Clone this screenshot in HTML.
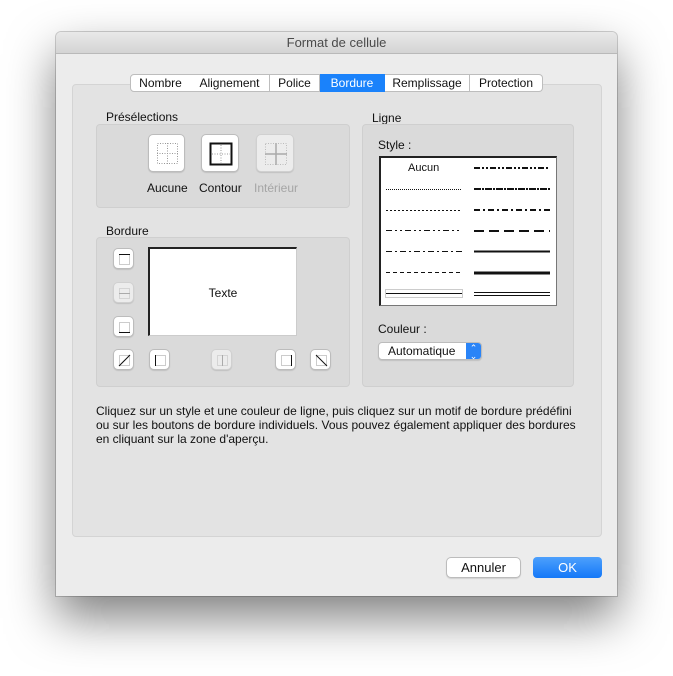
<!DOCTYPE html>
<html><head><meta charset="utf-8"><style>
*{box-sizing:border-box;margin:0;padding:0}
body{width:673px;height:676px;background:#fff;font-family:"Liberation Sans",sans-serif;font-size:12px;color:#111;position:relative;overflow:hidden}
.a{position:absolute}
#win{left:56px;top:32px;width:561px;height:564px;background:#ececec;border-radius:5px 5px 0 0;box-shadow:0 22px 48px rgba(0,0,0,.5),0 0 0 1px rgba(0,0,0,.18);overflow:hidden}
#title{left:0;top:0;width:561px;height:22px;background:linear-gradient(#e9e9e9,#d4d4d4);border-bottom:1px solid #b9b9b9;text-align:center;line-height:22px;font-size:13px;color:#4a4a4a}
.grp{background:#dadada;border:1px solid #cfcfcf;border-radius:4px}
.tab{top:74px;height:18px;line-height:17px;text-align:center;background:#fff;border:1px solid #bdbdbd;border-left:none;font-size:12px}
.btn{background:#fff;border:1px solid #bcbcbc;border-radius:5px;box-shadow:0 1px 1px rgba(0,0,0,.12)}
.dis{background:#ececec;border-color:#d0d0d0}
.sb{width:21px;height:21px}
</style></head><body>
<div class="a" id="win"><div class="a" id="title">Format de cellule</div></div>
<div class="a" style="left:72px;top:84px;width:530px;height:453px;background:#e3e3e3;border:1px solid #d4d4d4;border-radius:4px"></div>
<div class="a tab" style="left:130px;width:61px;border-left:1px solid #bdbdbd;border-radius:4px 0 0 4px">Nombre</div>
<div class="a tab" style="left:190px;width:80px">Alignement</div>
<div class="a tab" style="left:270px;width:50px">Police</div>
<div class="a tab" style="left:320px;width:65px;background:#1a82fb;color:#fff;border-color:#1a82fb">Bordure</div>
<div class="a tab" style="left:385px;width:85px">Remplissage</div>
<div class="a tab" style="left:470px;width:73px;border-radius:0 4px 4px 0">Protection</div>

<div class="a" style="left:106px;top:110px">Présélections</div>
<div class="a grp" style="left:96px;top:124px;width:254px;height:84px"></div>
<div class="a btn" style="left:148px;top:134px;width:37px;height:38px"><svg width="37" height="38"><g stroke="#999" stroke-dasharray="1 1.5" fill="none"><rect x="8.5" y="8.5" width="20" height="20"/><path d="M18.5 8v21M8 18.5h21"/></g></svg></div>
<div class="a btn" style="left:201px;top:134px;width:38px;height:38px"><svg width="38" height="38"><rect x="8.5" y="8.5" width="21" height="21" fill="none" stroke="#111" stroke-width="2"/><path d="M19 10v18M10 19h18" stroke="#999" stroke-dasharray="1 1.5"/></svg></div>
<div class="a btn dis" style="left:256px;top:134px;width:38px;height:38px"><svg width="38" height="38"><rect x="8.5" y="8.5" width="21" height="21" fill="none" stroke="#bbb" stroke-dasharray="1 1.5"/><path d="M19 8v22M8 19h22" stroke="#aaa" stroke-width="1.5"/></svg></div>
<div class="a" style="left:147px;top:181px">Aucune</div>
<div class="a" style="left:199px;top:181px">Contour</div>
<div class="a" style="left:254px;top:181px;color:#a5a5a5">Intérieur</div>

<div class="a" style="left:106px;top:224px">Bordure</div>
<div class="a grp" style="left:96px;top:237px;width:254px;height:150px"></div>
<div class="a btn sb" style="left:113px;top:248px"><svg width="21" height="21"><rect x="5.5" y="5.5" width="10" height="10" fill="none" stroke="#999" stroke-dasharray="1 1"/><path d="M5 5.5h11" stroke="#111"/></svg></div>
<div class="a btn sb dis" style="left:113px;top:282px"><svg width="21" height="21"><rect x="5.5" y="5.5" width="10" height="10" fill="none" stroke="#bbb" stroke-dasharray="1 1"/><path d="M5 10.5h11" stroke="#aaa"/></svg></div>
<div class="a btn sb" style="left:113px;top:316px"><svg width="21" height="21"><rect x="5.5" y="5.5" width="10" height="10" fill="none" stroke="#999" stroke-dasharray="1 1"/><path d="M5 15.5h11" stroke="#111"/></svg></div>
<div class="a btn sb" style="left:113px;top:349px"><svg width="21" height="21"><rect x="5.5" y="5.5" width="10" height="10" fill="none" stroke="#999" stroke-dasharray="1 1"/><path d="M5 16L16 5" stroke="#111"/></svg></div>
<div class="a btn sb" style="left:149px;top:349px"><svg width="21" height="21"><rect x="5.5" y="5.5" width="10" height="10" fill="none" stroke="#999" stroke-dasharray="1 1"/><path d="M5.5 5v11" stroke="#111"/></svg></div>
<div class="a btn sb dis" style="left:211px;top:349px"><svg width="21" height="21"><rect x="5.5" y="5.5" width="10" height="10" fill="none" stroke="#bbb" stroke-dasharray="1 1"/><path d="M10.5 5v11" stroke="#aaa"/></svg></div>
<div class="a btn sb" style="left:275px;top:349px"><svg width="21" height="21"><rect x="5.5" y="5.5" width="10" height="10" fill="none" stroke="#999" stroke-dasharray="1 1"/><path d="M15.5 5v11" stroke="#111"/></svg></div>
<div class="a btn sb" style="left:310px;top:349px"><svg width="21" height="21"><rect x="5.5" y="5.5" width="10" height="10" fill="none" stroke="#999" stroke-dasharray="1 1"/><path d="M5 5L16 16" stroke="#111"/></svg></div>
<div class="a" style="left:148px;top:247px;width:149px;height:89px;background:#fff;border:1px solid #ccc;border-top:2px solid #222;border-left:2px solid #222;text-align:center;line-height:88px">Texte</div>

<div class="a" style="left:372px;top:111px">Ligne</div>
<div class="a" style="left:362px;top:124px;width:212px;height:263px;background:#dadada;border:1px solid #cfcfcf;border-radius:4px"></div>
<div class="a" style="left:378px;top:138px">Style :</div>
<div class="a" style="left:379px;top:156px;width:178px;height:150px;background:#fff;border:1px solid #777;border-left:2px solid #222;border-top:2px solid #222"></div>
<div class="a" style="left:408px;top:162px;font-size:11px">Aucun</div>
<svg class="a" style="left:379px;top:156px" width="178" height="150">
<g fill="none" stroke="#111">
<path d="M7 33.5h76" stroke-dasharray="1 1"/>
<path d="M7 54.5h76" stroke-dasharray="2 2"/>
<path d="M7 74.5h76" stroke-dasharray="6 3 2 3 2 3"/>
<path d="M7 95.5h76" stroke-dasharray="6 3 2 3"/>
<path d="M7 116.5h76" stroke-dasharray="4 3"/>
<path d="M7 137.5h76"/>
<rect x="6.5" y="133.5" width="77" height="8" stroke="#999" stroke-dasharray="1 1"/>
<path d="M95 12h76" stroke-width="2" stroke-dasharray="6 2 2 2 2 2"/>
<path d="M95 33h76" stroke-width="2" stroke-dasharray="7 1 2 1"/>
<path d="M95 54h76" stroke-width="2" stroke-dasharray="6 3 2 3"/>
<path d="M95 75h76" stroke-width="2" stroke-dasharray="10 5"/>
<path d="M95 95.5h76" stroke-width="2"/>
<path d="M95 117h76" stroke-width="3"/>
<path d="M95 136.5h76M95 139.5h76"/>
</g></svg>
<div class="a" style="left:378px;top:322px">Couleur :</div>
<div class="a btn" style="left:378px;top:342px;width:104px;height:18px;border-radius:4px;overflow:hidden;padding-left:9px;line-height:16px">Automatique<div class="a" style="right:0;top:0;width:15px;height:17px;background:#2a84f7;color:#fff;font-size:9px;line-height:8px;text-align:center;padding-top:1px">⌃<br>⌄</div></div>

<div class="a" style="left:96px;top:404px;width:490px;line-height:14px">Cliquez sur un style et une couleur de ligne, puis cliquez sur un motif de bordure prédéfini ou sur les boutons de bordure individuels. Vous pouvez également appliquer des bordures en cliquant sur la zone d'aperçu.</div>

<div class="a btn" style="left:446px;top:557px;width:75px;height:21px;text-align:center;line-height:19px;font-size:13px">Annuler</div>
<div class="a" style="left:533px;top:557px;width:69px;height:21px;border-radius:4px;background:linear-gradient(#4da0fc,#1478f8);color:#fff;text-align:center;line-height:21px;font-size:13px">OK</div>
</body></html>
